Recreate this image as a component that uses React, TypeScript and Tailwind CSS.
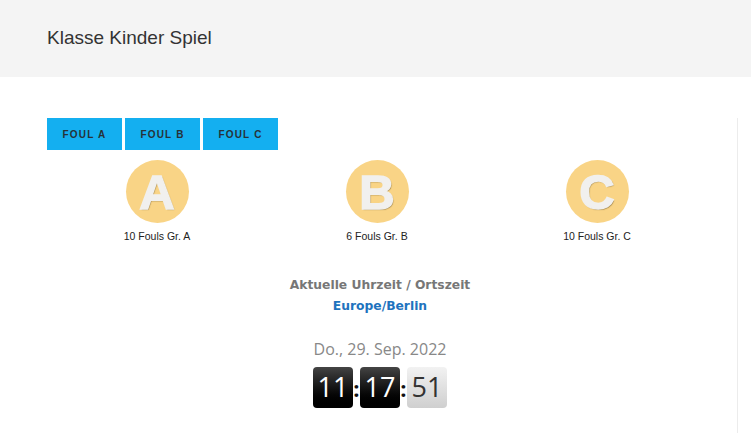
import React from 'react';

const groups = [
  { key: 'A', fouls: 10 },
  { key: 'B', fouls: 6 },
  { key: 'C', fouls: 10 },
];

const FoulButton: React.FC<{ label: string }> = ({ label }) => (
  <button className="h-[32px] w-[75px] bg-[#14aff0] text-[10px] font-bold tracking-[1.2px] text-[#263238] uppercase [font-family:'Liberation_Sans',Arial,sans-serif]">
    {label}
  </button>
);

const Digits: React.FC<{ value: string; light?: boolean }> = ({ value, light }) => (
  <div
    className={
      light
        ? 'flex h-[41px] w-[40px] items-center justify-center rounded-[4px] bg-gradient-to-b from-[#f2f2f2] to-[#cfcfcf] text-[27px] text-[#333]'
        : 'flex h-[41px] w-[40px] items-center justify-center rounded-[4px] bg-gradient-to-b from-[#444] to-[#000] text-[27px] text-white'
    }
  >
    {value}
  </div>
);

const Colon = () => <span className="w-[7px] text-center text-[22px] font-bold leading-none text-[#111]">:</span>;

export default function App() {
  return (
    <div className="min-h-[433px] bg-white [font-family:'Liberation_Sans',Arial,sans-serif]">
      {/* Header */}
      <header className="flex h-[77px] items-center bg-[#f4f4f4] px-[47px]">
        <h1 className="text-[19px] text-[#333]">Klasse Kinder Spiel</h1>
      </header>

      <div className="flex pl-[47px] pt-[41px]">
        <main className="min-h-[315px] w-[691px] border-r border-[#ececec]">
          {/* Buttons */}
          <div className="flex gap-[3px]">
            <FoulButton label="Foul A" />
            <FoulButton label="Foul B" />
            <FoulButton label="Foul C" />
          </div>

          {/* Circles */}
          <div className="mt-[10px] grid w-[660px] grid-cols-3">
            {groups.map((g) => (
              <div key={g.key} className="flex flex-col items-center">
                <div className="flex h-[63px] w-[63px] items-center justify-center rounded-full bg-[#f9d486]">
                  <span className="pt-[1px] text-[49px] font-bold leading-none text-[#f1f0ee] [-webkit-text-stroke:1.5px_#f1f0ee] [text-shadow:1px_1px_1px_rgba(90,70,30,0.55)]">
                    {g.key}
                  </span>
                </div>
                <div className="mt-[7px] text-[10.5px] leading-[12px] text-[#222]">
                  {g.fouls} Fouls Gr. {g.key}
                </div>
              </div>
            ))}
          </div>

          {/* Time */}
          <div className="mt-[33px] flex w-[666px] flex-col items-center">
            <div className="text-[12.3px] font-bold leading-[21px] text-[#777] [font-family:'DejaVu_Sans',Verdana,sans-serif]">
              Aktuelle Uhrzeit / Ortszeit
            </div>
            <div className="text-[12.3px] font-bold leading-[21px] text-[#1e73be] [font-family:'DejaVu_Sans',Verdana,sans-serif]">
              Europe/Berlin
            </div>
            <div className="mt-[20px] text-[16px] leading-[24px] text-[#888] [font-family:'Open_Sans',sans-serif]">
              Do., 29. Sep. 2022
            </div>
            <div className="mt-[6px] flex items-center [font-family:'Open_Sans',sans-serif]">
              <Digits value="11" />
              <Colon />
              <Digits value="17" />
              <Colon />
              <Digits value="51" light />
            </div>
          </div>
        </main>
      </div>
    </div>
  );
}
